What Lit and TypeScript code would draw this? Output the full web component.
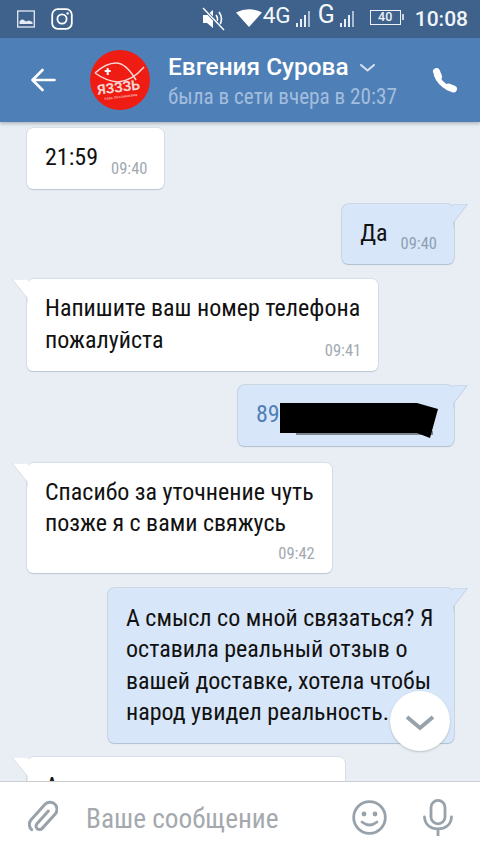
import { LitElement, html, css, svg } from "lit";
import { customElement } from "lit/decorators.js";

@customElement("app-root")
export class AppRoot extends LitElement {
  static styles = css`
    :host { display: block; width: 480px; height: 854px; font-family: Roboto, "Noto Sans", sans-serif; overflow: hidden; position: relative; background: #e8eef3; }
    * { box-sizing: border-box; }
    .page { display: flex; flex-direction: column; height: 854px; }
    .status { height: 38px; flex: none; background: #3e628c; display: flex; align-items: center; color: #fff; padding: 0 12px 0 17px; }
    .status .left { display: flex; align-items: center; gap: 16px; }
    .status .right { margin-left: auto; display: flex; align-items: center; }
    .net { font-size: 22.5px; line-height: 24px; margin-top: -9px; margin-left: -1px; color: #f4f7fa; }
    .g { font-size: 25px; margin-left: 6px; }
    .mute { margin-right: 11px; }
    .wifi { margin-right: 2px; margin-top: -3px; }
    .bars4 { margin-left: 4px; }
    .bars-g { margin-left: 4px; }
    .clock { font-size: 21px; font-weight: 500; margin-left: 14px; color: #f2f5f8; }
    .batt { width: 31px; height: 15px; border: 1.5px solid #eef2f6; font-size: 12.500px; font-weight: 500; line-height: 12px; text-align: center; position: relative; margin-left: 14px; margin-top: -3px; color: #eef2f6; }
    .batt::after { content: ""; position: absolute; right: -4.500px; top: 3px; width: 2px; height: 6px; background: #c7d3e0; }
    .header { height: 84px; flex: none; background: #4f7fb7; display: flex; align-items: center; color: #fff; position: relative; z-index: 2; box-shadow: 0 2px 3px rgba(60,70,80,.3); }
    .back { margin-left: 31px; }
    .avatar { margin-left: 34px; width: 60px; height: 60px; flex: none; }
    .titles { margin-left: 18px; flex: 1; margin-top: 4px; }
    .name { font-size: 24.400px; font-weight: 500; line-height: 30px; display: flex; align-items: center; }
    .name svg { margin-left: 11px; margin-top: 2px; }
    .sub { font-size: 21.200px; font-stretch: 75%; line-height: 30px; color: #a3bedd; }
    .phone { margin-right: 22px; }
    .chat { flex: 1; min-height: 0; overflow: hidden; padding: 6px 26px 0 27px; display: flex; flex-direction: column; align-items: flex-start; }
    .b { position: relative; background: #fff; border-radius: 6px; box-shadow: 0 0 0 .5px rgba(170,182,195,.5), 0 1px 1px rgba(90,110,130,.25); font-size: 24px; font-stretch: 75%; line-height: 31.500px; color: #111; padding: 14px 18px 15px; flex: none; }
    .b.out { background: #d7e6f8; align-self: flex-end; box-shadow: 0 0 0 .5px rgba(140,165,195,.6), 0 1px 1px rgba(90,110,130,.25); }
    .b.g15 { margin-top: 15px; }
    .b.g14 { margin-top: 14px; }
    .b.g17 { margin-top: 17px; }
    .b.w216 { width: 216px; }
    .b.w318 { width: 318px; }
    .b.w346 { width: 346px; padding-top: 15px; padding-bottom: 14px; }
    .tail { position: absolute; top: 0; }
    .b:not(.out) .tail { left: -16px; }
    .b.out .tail { right: -15px; }
    .t { font-size: 16.500px; color: #a2a9b0; line-height: 20px; }
    .b.out .t { color: #8fa0b3; }
    .row { display: flex; justify-content: space-between; align-items: flex-end; gap: 13px; margin-right: -1px; }
    .row .t { margin-bottom: -5px; }
    .foot { text-align: right; margin-top: 4px; margin-bottom: -6px; margin-right: -1px; }
    .link { color: #4f80b8; }
    .input { height: 73px; flex: none; background: #fff; border-top: 1px solid #c9ced3; display: flex; align-items: center; position: relative; z-index: 2; padding: 0 27px 2px 28px; }
    .ph { font-size: 27.300px; font-stretch: 75%; color: #a4a9ae; margin-left: 28px; margin-top: 3px; flex: 1; }
    .input .mic { margin-left: 36px; }
    .fab { position: absolute; left: 390px; top: 691px; width: 60px; height: 60px; border-radius: 50%; background: #fff; box-shadow: 0 1px 2px rgba(80,90,100,.3); display: flex; align-items: center; justify-content: center; z-index: 1; padding-top: 2px; }
    .redact { position: absolute; left: 270px; top: 400px; z-index: 1; }
  `;

  tail(out: boolean) {
    return out
      ? html`<svg class="tail" width="16" height="26" viewBox="0 0 16 26"><path d="M0 0H14.500L1 18Q0 20 0 24Z" fill="#d7e6f8"/><path d="M0 0H14.500L1 18Q0 20 0 24" fill="none" stroke="#b9cbdf" stroke-width=".8"/></svg>`
      : html`<svg class="tail" width="17" height="26" viewBox="0 0 17 26"><path d="M17 0H1L15.500 18Q17 20 17 24Z" fill="#fff"/><path d="M17 0H1L15.500 18Q17 20 17 24" fill="none" stroke="#d3d8dd" stroke-width=".8"/></svg>`;
  }

  bars() {
    return [0, 4, 8, 12].map((x, i) => svg`<rect x="${x + 1}" y="${12 - i * 4 + 1}" width="2" height="${4 + i * 4}" fill="${i === 3 ? "#a9bdd4" : "#e6edf4"}"/>`);
  }

  render() {
    return html`<div class="page">
      <div class="status">
        <div class="left">
          <svg width="18" height="18" viewBox="0 0 18 18"><rect x=".7" y="1" width="16.600" height="16" fill="none" stroke="#e4ebf3" stroke-width="1.300"/><path d="M2.500 14V11.500Q4 9 6 9.500L9 11.500L12 10.500L15.500 12V14Z" fill="#e4ebf3"/></svg>
          <svg width="22" height="22" viewBox="0 0 22 22"><rect x="1.200" y="1.200" width="19.600" height="19.600" rx="5.500" fill="none" stroke="#fff" stroke-width="1.800"/><circle cx="11" cy="11" r="4.600" fill="none" stroke="#fff" stroke-width="1.800"/><circle cx="16.600" cy="5.400" r="1.200" fill="#fff"/></svg>
        </div>
        <div class="right">
          <svg class="mute" width="23" height="24" viewBox="0 0 23 24"><path d="M1 8H5L11 3V21L5 16H1Z" fill="#fff"/><path d="M14 8Q17 12 14 16M17 5Q22 12 17 19" fill="none" stroke="#fff" stroke-width="1.600"/><path d="M1 1L22 23" stroke="#3e628c" stroke-width="3"/><path d="M1 1L22 23" stroke="#fff" stroke-width="1.400"/></svg>
          <svg class="wifi" width="26" height="18" viewBox="0 0 26 18"><path d="M0 3.500Q13 -3 26 3.500L13 18Z" fill="#fff"/></svg>
          <span class="net">4G</span>
          <svg class="bars4" width="17" height="18" viewBox="0 0 17 18">${this.bars()}</svg>
          <span class="net g">G</span>
          <svg class="bars-g" width="17" height="18" viewBox="0 0 17 18">${this.bars()}</svg>
          <div class="batt">40</div>
          <span class="clock">10:08</span>
        </div>
      </div>
      <div class="header">
        <svg class="back" width="25" height="24" viewBox="0 0 25 24"><path d="M23.500 12H2M11.500 2L1.500 12L11.500 22" fill="none" stroke="#fff" stroke-width="2.600" stroke-linecap="round" stroke-linejoin="round"/></svg>
        <svg class="avatar" viewBox="0 0 60 60"><circle cx="30" cy="30" r="30" fill="#ee1c12"/>
          <path d="M5 23Q16 13 26 13Q36 13 46 30M5 23Q16 31 28 32Q42 31 54 17" fill="none" stroke="#f8d6d2" stroke-width="1.500"/>
          <path d="M14.700 20H16.700V18H18.700V20H20.700V22H18.700V25H16.700V22H14.700Z" fill="#fff"/>
          <g transform="rotate(-7 30 40)"><text x="29" y="42" text-anchor="middle" font-family="Roboto" font-size="14" font-weight="700" fill="#f7d5d2">ЯЗЗЗЬ</text>
          <text x="30" y="48" text-anchor="middle" font-family="Roboto" font-size="4" fill="#f7c9c4">язвь писсимизма</text></g>
        </svg>
        <div class="titles">
          <div class="name">Евгения Сурова<svg width="15" height="8" viewBox="0 0 15 8"><path d="M1 1L7.500 6.500L14 1" fill="none" stroke="#d6e2f0" stroke-width="2" stroke-linecap="round" stroke-linejoin="round"/></svg></div>
          <div class="sub">была в сети вчера в 20:37</div>
        </div>
        <svg class="phone" width="26" height="26" viewBox="0 0 26 26"><g fill="none" stroke="#fff" stroke-linecap="round"><path d="M4.500 4.500L6.500 9.500" stroke-width="7"/><path d="M16.500 20L21.500 22" stroke-width="7"/><path d="M4.500 8C6 13 11 19 17 21" stroke-width="5"/></g></svg>
      </div>
      <div class="chat">
        <div class="b"><div class="row"><span>21:59</span><span class="t">09:40</span></div></div>
        <div class="b out g15">${this.tail(true)}<div class="row"><span>Да</span><span class="t">09:40</span></div></div>
        <div class="b g15">${this.tail(false)}Напишите ваш номер телефона<div class="row"><span>пожалуйста</span><span class="t">09:41</span></div></div>
        <div class="b out g14 w216">${this.tail(true)}<span class="link">89</span></div>
        <div class="b g17">${this.tail(false)}Спасибо за уточнение чуть<br>позже я с вами свяжусь<div class="t foot">09:42</div></div>
        <div class="b out g15 w346">${this.tail(true)}А смысл со мной связаться? Я<br>оставила реальный отзыв о<br>вашей доставке, хотела чтобы<br>народ увидел реальность.</div>
        <div class="b g14 w318">${this.tail(false)}А</div>
      </div>
      <div class="input">
        <svg width="30" height="34" viewBox="0 0 30 34"><g transform="rotate(42 15 17)" fill="none" stroke="#98a2ab" stroke-width="3" stroke-linecap="round"><path d="M15 9V26A3.500 3.500 0 0 0 22 26V6.500A7 7 0 0 0 8 6.500V27A7 7 0 0 0 15 34"/></g></svg>
        <span class="ph">Ваше сообщение</span>
        <svg width="35" height="35" viewBox="0 0 35 35"><circle cx="17.500" cy="17.500" r="15.800" fill="none" stroke="#98a2ab" stroke-width="2.800"/><circle cx="12" cy="14" r="2.400" fill="#98a2ab"/><circle cx="23" cy="14" r="2.400" fill="#98a2ab"/><path d="M10 22Q17.500 28 25 22" fill="none" stroke="#98a2ab" stroke-width="2.800" stroke-linecap="round"/></svg>
        <svg class="mic" width="30" height="37" viewBox="0 0 30 37"><rect x="8" y="1.400" width="14" height="23.500" rx="7" fill="none" stroke="#98a2ab" stroke-width="2.800"/><path d="M1.500 18C2 26 8 30 15 30C22 30 28 26 28.500 18M15 30V37" fill="none" stroke="#98a2ab" stroke-width="2.800" stroke-linecap="round"/></svg>
      </div>
    </div>
    <svg class="redact" width="172" height="40" viewBox="270 400 172 40"><path d="M296 431H433V435H296Z" fill="#7d8590"/><path d="M280 403H417L438 409L430 438L417 433H280Z" fill="#000"/></svg>
    <div class="fab"><svg width="30" height="17" viewBox="0 0 30 17"><path d="M2 3L15 14L28 3" fill="none" stroke="#98a2ab" stroke-width="4"/></svg></div>`;
  }
}
